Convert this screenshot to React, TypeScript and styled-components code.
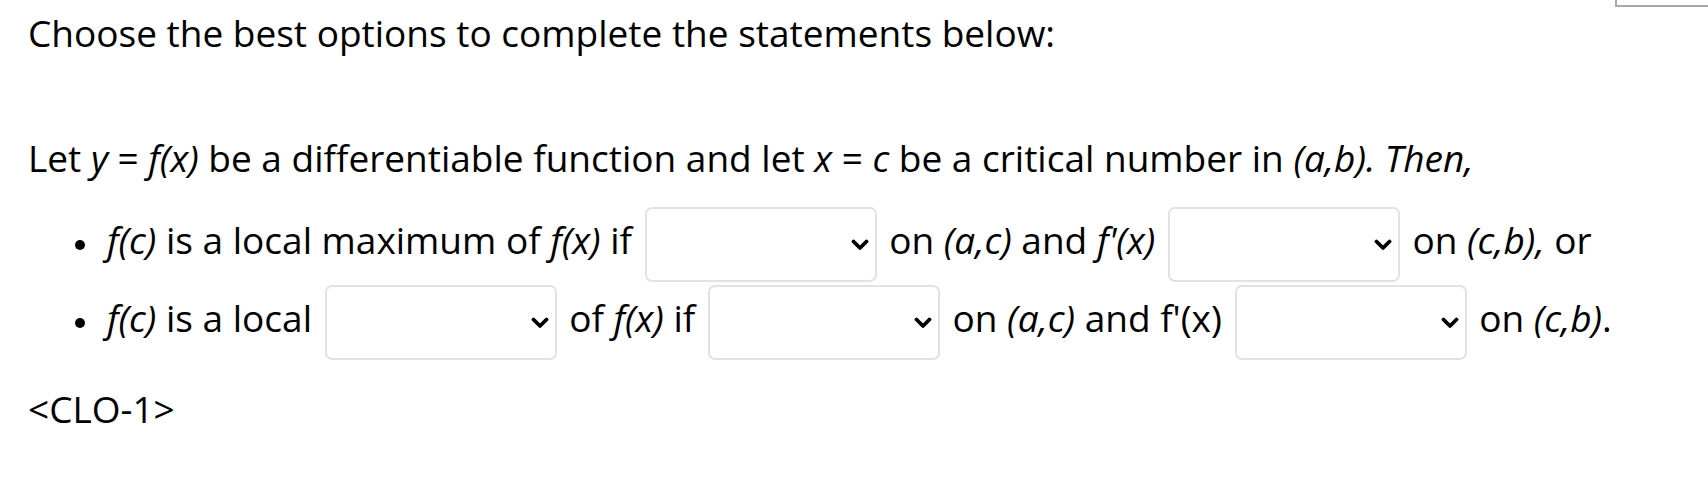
import React from 'react';
import styled, { createGlobalStyle } from 'styled-components';

const GlobalStyle = createGlobalStyle`
  html, body {
    margin: 0;
    padding: 0;
    background: #ffffff;
  }
  body {
    font-family: 'Open Sans', 'Liberation Sans', sans-serif;
    color: #000000;
  }
`;

const Page = styled.div`
  position: relative;
  padding: 7px 0 0 28px;
  font-size: 37px;
  line-height: 52px;
  height: 475px;
  overflow: hidden;
`;

// stray bit of a bordered box cut off at the top right corner of the capture
const CornerTab = styled.div`
  position: absolute;
  top: -10px;
  right: -10px;
  width: 99px;
  height: 13px;
  border: 2px solid #a8a8a8;
`;

const Prompt = styled.p`
  margin: 0;
`;

const Statement = styled.p`
  margin: 73px 0 0 0;
`;

const Bullets = styled.ul`
  margin: 23px 0 0 0;
  padding-left: 79px;
  list-style: none;
`;

const Item = styled.li`
  margin-bottom: 3px;

  &::before {
    content: '';
    display: inline-block;
    width: 10px;
    height: 10px;
    border-radius: 50%;
    background: #000000;
    margin: 0 22px 0 -32px;
    vertical-align: middle;
  }
`;

const Tag = styled.p`
  margin: 23px 0 0 0;
`;

const SelectWrap = styled.span`
  position: relative;
  display: inline-block;
  width: 232px;
  height: 75px;
  margin: 0 3px;
  vertical-align: middle;
`;

const Select = styled.select`
  appearance: none;
  -webkit-appearance: none;
  box-sizing: border-box;
  width: 100%;
  height: 100%;
  border: 2px solid #e2e2e2;
  border-radius: 7px;
  background: #ffffff;
  font: inherit;
  padding: 0 40px 0 12px;
  outline: none;
  vertical-align: top;
`;

const Chevron = styled.svg`
  position: absolute;
  right: 8px;
  top: 50%;
  width: 18px;
  height: 12px;
  margin-top: -6px;
  pointer-events: none;
`;

const Dropdown: React.FC = () => (
  <SelectWrap>
    <Select defaultValue="">
      <option value=""></option>
      <option value="pos">&gt; 0</option>
      <option value="neg">&lt; 0</option>
    </Select>
    <Chevron viewBox="0 0 18 12">
      <path
        d="M2.5 2.5 L9 9 L15.5 2.5"
        fill="none"
        stroke="#000"
        strokeWidth="3.8"
        strokeLinecap="round"
        strokeLinejoin="round"
      />
    </Chevron>
  </SelectWrap>
);

const App: React.FC = () => (
  <>
    <GlobalStyle />
    <Page>
      <CornerTab />
      <Prompt>Choose the best options to complete the statements below:</Prompt>
      <Statement>
        Let <i>y</i> = <i>f(x)</i> be a differentiable function and let <i>x</i> = <i>c</i> be a
        critical number in <i>(a,b). Then,</i>
      </Statement>
      <Bullets>
        <Item>
          <i>f(c)</i> is a local maximum of <i>f(x)</i> if <Dropdown /> on <i>(a,c)</i> and{' '}
          <i>f'(x)</i> <Dropdown /> on <i>(c,b),</i> or
        </Item>
        <Item>
          <i>f(c)</i> is a local <Dropdown /> of <i>f(x)</i> if <Dropdown /> on <i>(a,c)</i> and
          f'(x) <Dropdown /> on <i>(c,b)</i>.
        </Item>
      </Bullets>
      <Tag>&lt;CLO-1&gt;</Tag>
    </Page>
  </>
);

export default App;
